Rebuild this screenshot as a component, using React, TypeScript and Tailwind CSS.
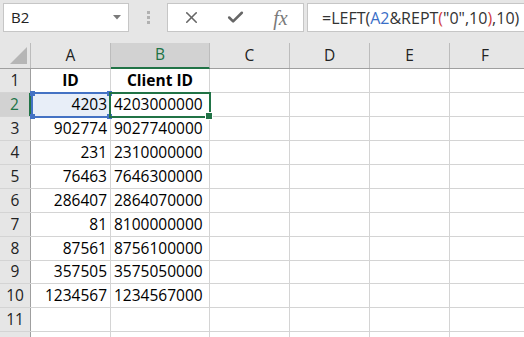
import React from 'react';
import { X, Check } from 'lucide-react';

const rows: { n: number; a: string; b: string; h: string }[] = [
  { n: 1, a: 'ID', b: 'Client ID', h: 'h-[24px]' },
  { n: 2, a: '4203', b: '4203000000', h: 'h-[24px]' },
  { n: 3, a: '902774', b: '9027740000', h: 'h-[24px]' },
  { n: 4, a: '231', b: '2310000000', h: 'h-[24px]' },
  { n: 5, a: '76463', b: '7646300000', h: 'h-[24px]' },
  { n: 6, a: '286407', b: '2864070000', h: 'h-[24px]' },
  { n: 7, a: '81', b: '8100000000', h: 'h-[24px]' },
  { n: 8, a: '87561', b: '8756100000', h: 'h-[24px]' },
  { n: 9, a: '357505', b: '3575050000', h: 'h-[23px]' },
  { n: 10, a: '1234567', b: '1234567000', h: 'h-[24px]' },
  { n: 11, a: '', b: '', h: 'h-[24px]' },
  { n: 12, a: '', b: '', h: 'h-[24px]' },
];

const cols = ['C', 'D', 'E'];

const Handle = ({ className }: { className: string }) => (
  <div className={`absolute w-[5px] h-[5px] bg-[#4472c4] ${className}`} />
);

export default function App() {
  return (
    <div className="w-[524px] h-[337px] overflow-hidden bg-[#e6e6e6] font-['Open_Sans',sans-serif] text-black relative">
      {/* formula bar */}
      <div className="flex items-start h-[43px] pt-[3px] pl-[3px]">
        <div className="w-[126px] h-[29px] bg-white border border-[#c6c6c6] flex items-center justify-between pl-[7px] pr-[7px]">
          <span className="text-[15px] text-[#222]">B2</span>
          <svg width="8" height="5" viewBox="0 0 8 5"><path d="M0 0h8L4 4.5z" fill="#7a7a7a" /></svg>
        </div>
        <div className="w-[38px] h-[29px] flex flex-col items-center justify-center gap-[2px]">
          <div className="w-[3px] h-[3px] bg-[#b1b1b1]" />
          <div className="w-[3px] h-[3px] bg-[#b1b1b1]" />
          <div className="w-[3px] h-[3px] bg-[#b1b1b1]" />
        </div>
        <div className="w-[137px] h-[29px] bg-white border border-[#c6c6c6] flex items-center">
          <div className="w-[45px] flex justify-center pl-[1px]">
            <X size={19} strokeWidth={2} color="#666666" />
          </div>
          <div className="w-[45px] flex justify-center">
            <Check size={19} strokeWidth={3.2} color="#666666" />
          </div>
          <div className="w-[45px] flex justify-center">
            <span className="font-['Liberation_Serif',serif] italic text-[20px] text-[#7a7a7a] leading-none">fx</span>
          </div>
        </div>
        <div className="ml-[3px] flex-1 h-[29px] bg-white border border-r-0 border-[#c6c6c6] flex items-center pl-[14px] text-[16px] text-[#333] whitespace-nowrap">
          <span>=LEFT(</span>
          <span className="text-[#3a6fc7]">A2</span>
          <span>&amp;REPT</span>
          <span className="text-[#d03c3c]">(</span>
          <span>"0",10</span>
          <span className="text-[#d03c3c]">)</span>
          <span>,10)</span>
        </div>
      </div>

      {/* column headers */}
      <div className="flex h-[26px] border-b border-[#9f9f9f]">
        <div className="w-[31px] border-r border-[#bcbcbc] relative">
          <svg className="absolute left-[10px] top-[4px]" width="17" height="17" viewBox="0 0 17 17">
            <path d="M17 0V17H0z" fill="#b6b6b6" />
          </svg>
        </div>
        <div className="w-[80px] border-r border-[#bcbcbc] flex items-center justify-center text-[15.5px] text-[#222]">A</div>
        <div className="w-[99px] border-r border-[#bcbcbc] bg-[#d2d2d2] border-b-2 border-b-[#217346] -mb-[1px] flex items-center justify-center text-[15.5px] text-[#217346]">B</div>
        {cols.map((c) => (
          <div key={c} className="w-[80px] border-r border-[#bcbcbc] flex items-center justify-center text-[15.5px] text-[#222]">{c}</div>
        ))}
        <div className="flex-1 flex items-center justify-center text-[15.5px] text-[#222] pr-[4px]">F</div>
      </div>

      {/* grid */}
      <div className="bg-white relative">
        {rows.map((r) => {
          const sel = r.n === 2;
          const head = r.n === 1;
          return (
            <div key={r.n} className={`flex ${r.h} border-b border-[#d4d4d4]`}>
              <div
                className={`w-[31px] flex items-center justify-center text-[15.5px] border-r ${
                  sel ? 'bg-[#d2d2d2] text-[#217346] border-r-2 border-r-[#217346]' : 'bg-[#e6e6e6] text-[#222] border-[#9f9f9f]'
                }`}
              >
                {r.n < 12 ? r.n : ''}
              </div>
              <div
                className={`w-[80px] border-r border-[#d4d4d4] flex items-center text-[15.5px] ${
                  head ? 'justify-center font-bold' : 'justify-end pr-[3px]'
                } ${sel ? 'bg-[#e8eef8]' : ''}`}
              >
                {r.a}
              </div>
              <div
                className={`w-[99px] border-r border-[#d4d4d4] flex items-center text-[15.5px] ${
                  head ? 'justify-center font-bold' : 'justify-start pl-[3px]'
                }`}
              >
                {r.b}
              </div>
              {cols.map((c) => (
                <div key={c} className="w-[80px] border-r border-[#d4d4d4]" />
              ))}
              <div className="flex-1" />
            </div>
          );
        })}

        {/* A2 reference highlight */}
        <div className="absolute left-[31px] top-[23px] w-[80px] h-[26px] border-2 border-[#4472c4] pointer-events-none">
          <Handle className="-left-[3px] -top-[3px]" />
          <Handle className="-right-[3px] -top-[3px]" />
          <Handle className="-left-[3px] -bottom-[3px]" />
          <Handle className="-right-[3px] -bottom-[3px]" />
        </div>
        {/* B2 active cell */}
        <div className="absolute left-[109px] top-[23px] w-[102px] h-[26px] border-2 border-[#217346] pointer-events-none">
          <div className="absolute -right-[4px] -bottom-[4px] w-[6px] h-[6px] bg-[#217346] border border-white box-content" />
        </div>
      </div>
    </div>
  );
}
